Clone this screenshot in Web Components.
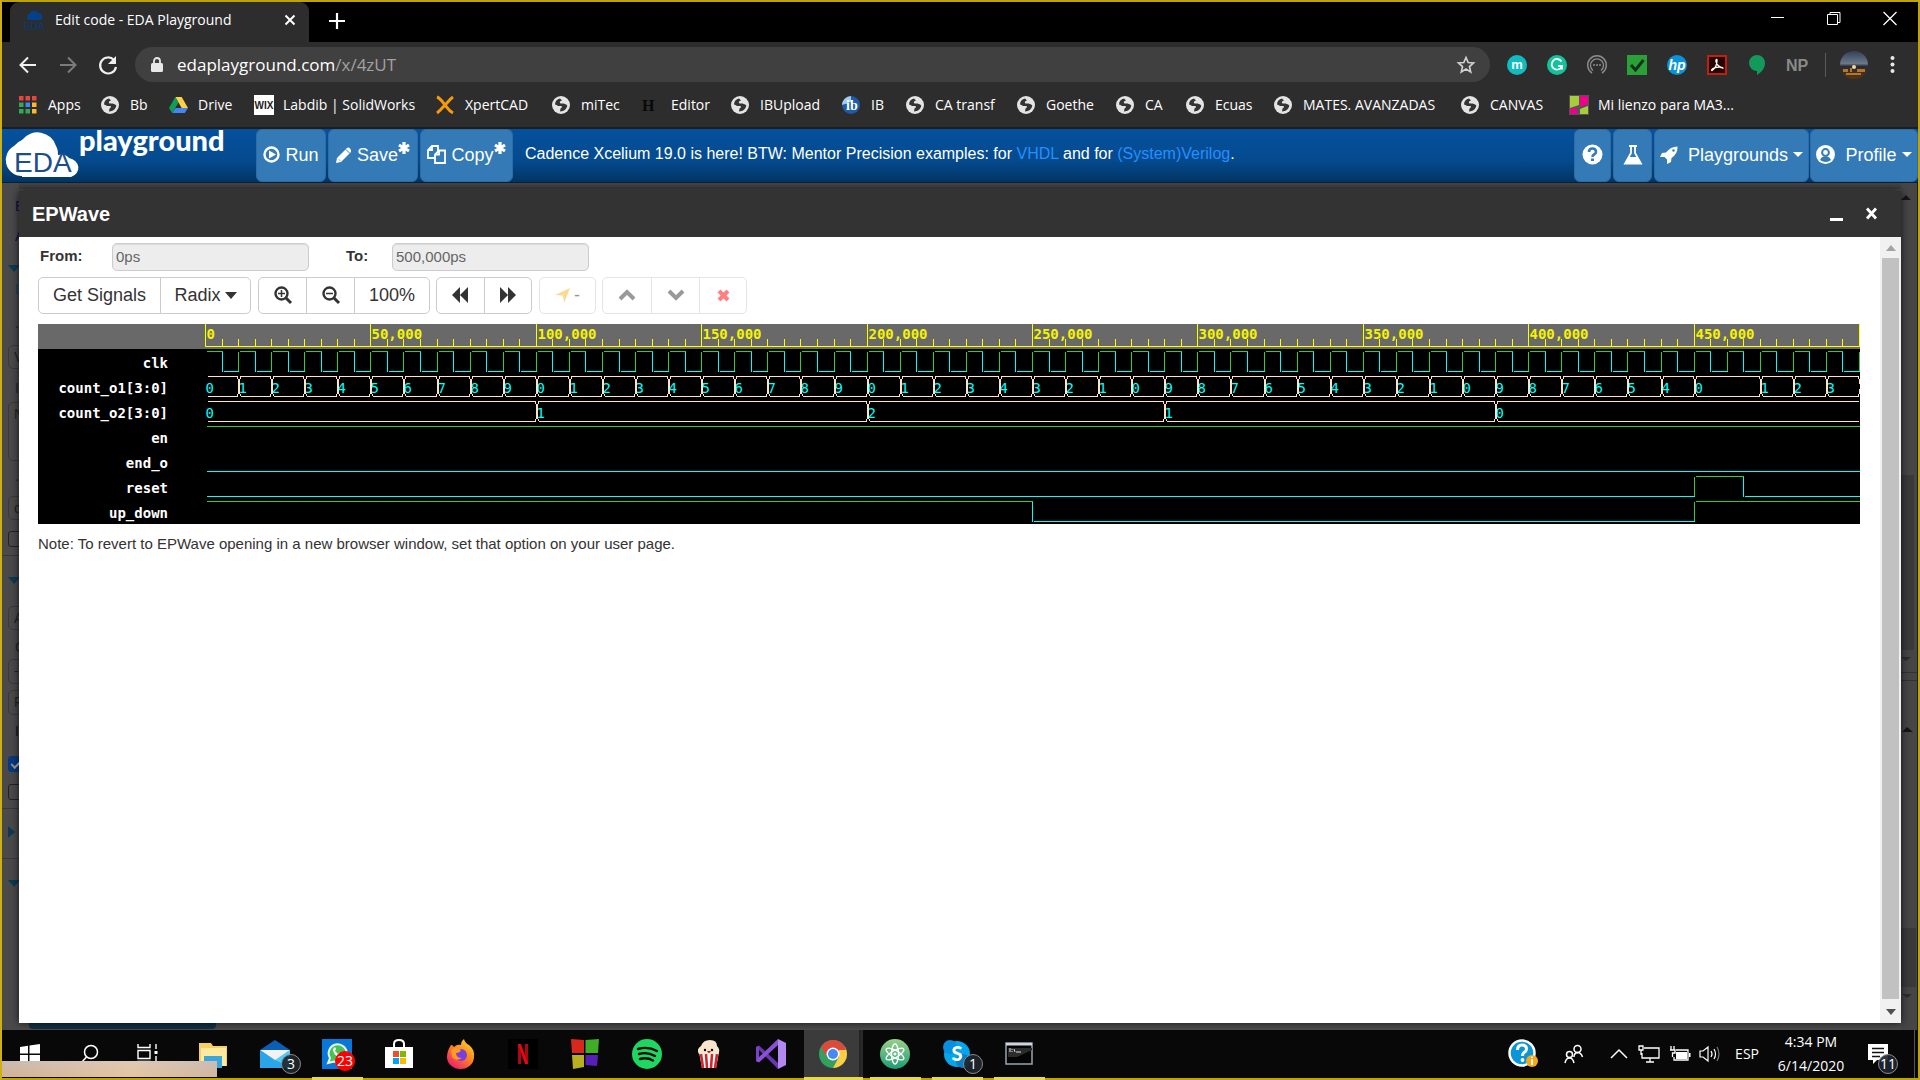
<!DOCTYPE html>
<html lang="en">
<head>
<meta charset="utf-8">
<title>Edit code - EDA Playground</title>
<style>
html,body{margin:0;height:100%}
body{font-family:"Liberation Sans",Arial,sans-serif;background:#000}
</style>
</head>
<body>
<desktop-frame>
  <tab-strip></tab-strip>
  <address-bar></address-bar>
  <bookmark-bar></bookmark-bar>
  <eda-header></eda-header>
  <page-stage>
    <page-backdrop></page-backdrop>
    <wave-dialog heading="EPWave">
      <range-form></range-form>
      <wave-toolbar></wave-toolbar>
      <wave-view></wave-view>
      <p slot="note">Note: To revert to EPWave opening in a new browser window, set that option on your user page.</p>
    </wave-dialog>
  </page-stage>
  <task-bar slot="bottom"></task-bar>
</desktop-frame>
<script>
const UI = '"Open Sans","Noto Sans",sans-serif';
function define(name, html, setup) {
  const tpl = document.createElement('template');
  tpl.innerHTML = html;
  customElements.define(name, class extends HTMLElement {
    connectedCallback() {
      if (this.shadowRoot) return;
      this.attachShadow({ mode: 'open' }).append(tpl.content.cloneNode(true));
      if (setup) setup.call(this, this.shadowRoot);
    }
  });
}
const RESET = `:host,*{box-sizing:border-box}svg{display:block;flex:none;overflow:visible}button{font:inherit;color:inherit;background:none;border:0;padding:0;margin:0}a{color:inherit;text-decoration:none}`;

define('desktop-frame', `<style>
:host{display:flex;flex-direction:column;min-height:100vh;box-sizing:border-box;border:2px solid;border-color:#bfa300 #bfa300 #bfa300 #d0b010;background:#2d2d2d}
::slotted(page-stage){flex:1}
</style><slot></slot><slot name="bottom"></slot>`);

/* ---------- browser chrome ---------- */
define('tab-strip', `<style>${RESET}
:host{display:flex;height:40px;background:#000;color:#fff;font:14px/20px ${UI}}
.tab{display:flex;align-items:center;width:299px;margin-left:8px;padding:0 12px 4px 14px;background:#2d2d2d;border-radius:9px 9px 0 0}
.tab span{flex:1;margin-left:11px}
.new{margin-left:20px;align-self:center;padding-bottom:2px}
.win{display:flex;margin-left:auto;padding-top:8px}
.win button{width:56px;display:flex;justify-content:center;align-items:flex-start}
</style>
<div class="tab"><svg width="20" height="20" viewBox="0 0 20 20"><path d="M4 10a4 4 0 0 1 1-6 5 5 0 0 1 9-1 4 4 0 0 1 3 7z" fill="#05418a"/><text x="0" y="20" font-family="Liberation Sans" font-size="10" fill="#0b3a72">EDA</text></svg>
<span>Edit code - EDA Playground</span><button aria-label="Close tab"><svg width="14" height="14"><path d="M2.500 2.500l9 9m0-9l-9 9" stroke="#fff" stroke-width="2"/></svg></button></div>
<button class="new" aria-label="New tab"><svg width="16" height="16"><path d="M8 0v16M0 8h16" stroke="#fff" stroke-width="2.200"/></svg></button>
<div class="win"><button aria-label="Minimize"><svg width="14" height="16"><path d="M0 7.500h13" stroke="#fff"/></svg></button>
<button aria-label="Restore"><svg width="14" height="16" fill="none" stroke="#fff"><path d="M.5 4.500h10v10H.5zM3 4V2.500h10v10h-2"/></svg></button>
<button aria-label="Close"><svg width="14" height="16"><path d="M.5 2l13 13M13.500 2l-13 13" stroke="#fff" stroke-width="1.300"/></svg></button></div>`);

define('address-bar', `<style>${RESET}
:host{display:flex;align-items:center;height:45px;padding:0 23px 0 16px;background:#2d2d2d;color:#e8e8e8}
.nav{display:flex;gap:20px;width:117px}
.omni{flex:1;display:flex;align-items:center;height:35px;background:#404040;border-radius:18px;padding:0 14px 0 15px}
.url{flex:1;margin-left:13px;font:17px/24px ${UI};color:#fff}.url i{font-style:normal;color:#a2a2a2}
.ext{display:flex;gap:20px;margin-left:17px;align-items:center}
.sep{width:1px;height:24px;background:#5a5a5a;margin-left:18px}
.av{margin:0 22px 0 14px}
</style>
<div class="nav"><button aria-label="Back"><svg width="20" height="20" fill="none" stroke="#f0f0f0" stroke-width="2"><path d="M18 10H3M10 2.500L2.500 10l7.500 7.500"/></svg></button>
<button aria-label="Forward"><svg width="20" height="20" fill="none" stroke="#7c7c7c" stroke-width="2"><path d="M2 10h15M10 2.500l7.500 7.500-7.500 7.500"/></svg></button>
<button aria-label="Reload"><svg width="20" height="20" fill="none" stroke="#f0f0f0" stroke-width="2.200"><path d="M16 5A8 8 0 1 0 18 12"/><path d="M18 1v8h-8z" fill="#f0f0f0" stroke="none"/></svg></button></div>
<div class="omni"><svg width="14" height="16" viewBox="0 0 14 16"><rect x="1" y="6" width="12" height="9" rx="1.500" fill="#e8e8e8"/><path d="M4 7V4a3 3 0 0 1 6 0v3" fill="none" stroke="#e8e8e8" stroke-width="1.800"/></svg>
<span class="url" role="textbox" aria-label="Address" contenteditable="plaintext-only">edaplayground.com<i>/x/4zUT</i></span>
<svg width="20" height="20" viewBox="0 0 20 20"><path d="M10 2.500l2.200 5 5.300.5-4 3.600 1.200 5.300L10 14.100l-4.700 2.800 1.200-5.300-4-3.600 5.300-.5z" fill="none" stroke="#d0d0d0" stroke-width="1.700"/></svg></div>
<div class="ext">
<svg width="20" height="20"><circle cx="10" cy="10" r="10" fill="#10bcc0"/><text x="10" y="14" text-anchor="middle" font-family="Liberation Sans" font-weight="bold" font-size="13" fill="#fff">m</text></svg>
<svg width="20" height="20"><circle cx="10" cy="10" r="10" fill="#12c39a"/><path d="M14.500 6.500A5.300 5.300 0 1 0 15 11h-4M15 11v3.500" fill="none" stroke="#fff" stroke-width="1.800"/></svg>
<svg width="20" height="20" fill="none" stroke="#8c8c8c"><path d="M5 18A9.300 9.300 0 1 1 15 18" stroke-width="1.500"/><path d="M6 15.500A6.500 6.500 0 1 1 14 15.500" stroke-width="1.300"/><path d="M6 10h8" stroke-dasharray="2 1" stroke-width="1.500"/></svg>
<svg width="20" height="20"><path d="M0 0h20v20H0z" fill="#2aa136"/><path d="M4 10l4.500 5L16.500 5" fill="none" stroke="#16301a" stroke-width="3"/></svg>
<svg width="20" height="20"><circle cx="10" cy="10" r="10" fill="#0a94d8"/><text x="10" y="14.500" text-anchor="middle" font-family="Liberation Sans" font-style="italic" font-weight="bold" font-size="14" fill="#fff">hp</text></svg>
<svg width="20" height="20"><path d="M1 1h18v18H1z" fill="#270505" stroke="#c02010" stroke-width="2"/><path d="M5 15.500c3-2 5-5 5-10 0-2-1.500-1-1 1 1 4 4 6 7 6.500 0-1-5-1.500-9 0-2 1-3 2.500-2 2.500z" fill="none" stroke="#fff" stroke-width="1.300"/></svg>
<svg width="20" height="20"><path d="M10 0a8 8 0 0 1 8 8c0 5-3 9-8 12v-4a8 8 0 0 1 0-16z" fill="#139a5b"/></svg>
<svg width="20" height="20"><text x="10" y="16" text-anchor="middle" font-family="Liberation Sans Narrow,Liberation Sans" font-weight="bold" font-size="16" fill="#8a8a8a">NP</text></svg></div>
<div class="sep"></div>
<svg class="av" width="28" height="28"><defs><linearGradient id="s" x2="0" y2="1"><stop offset="0" stop-color="#34405a"/><stop offset=".45" stop-color="#6a7888"/><stop offset=".55" stop-color="#2a2a34"/><stop offset="1" stop-color="#5a3510"/></linearGradient></defs><circle cx="14" cy="14" r="14" fill="url(#s)"/><path d="M3 18h5v3H3zM10 17h2v4h-2zM17 18h8v3h-8zM6 22h15v2H6z" fill="#b5762a"/><circle cx="14" cy="16" r="2" fill="#f5d9a0"/></svg>
<button aria-label="Menu"><svg width="5" height="20" fill="#e8e8e8"><circle cx="2.500" cy="3" r="2"/><circle cx="2.500" cy="9.500" r="2"/><circle cx="2.500" cy="16" r="2"/></svg></button>`);

const GLOBE = `<svg width="18" height="18" viewBox="0 0 18 18"><circle cx="9" cy="9" r="9" fill="#e4e4e4"/><path d="M8 2.500c-3 .5-5 3-5 6 1 0 2 .5 3 1.500h3.500c1 1 0 2-1 2.500L8 15.500c4 0 7-3 7.300-6-1-1.500-2.300-1-3.500-2H8.500C7 6 8 5 10 4.500z" fill="#343434"/></svg>`;
const MARKS = [
 ['Apps',82,`<svg width="18" height="18">${[0,1,2].map(r=>[0,1,2].map(c=>`<path d="M${c*6.500} ${r*6.500}h4.500v4.500h-4.500z" fill="${[['#e8453c','#e8453c','#e8453c'],['#34a853','#4285f4','#f9bb2d'],['#34a853','#34a853','#f9bb2d']][r][c]}"/>`).join('')).join('')}</svg>`],
 ['Bb',68,GLOBE],
 ['Drive',85,`<svg width="19" height="18"><path d="M6.300 1h6.400L19 12h-6.300z" fill="#ffcf48"/><path d="M6.300 1L0 12l3.200 5L9.500 6.500z" fill="#0f9d58"/><path d="M6.500 12H19l-3.300 5H3.200z" fill="#4285f4"/></svg>`],
 ['Labdib | SolidWorks',182,`<svg width="20" height="20"><path d="M0 0h20v20H0z" fill="#fff"/><text x="10" y="14" text-anchor="middle" font-family="Liberation Sans" font-weight="bold" font-size="10" fill="#222">WIX</text></svg>`],
 ['XpertCAD',116,`<svg width="18" height="18"><path d="M1 1c3 1 5 4 8 8s4 6 8 8M17 1c-3 2-5 5-8 8s-5 6-8 8" fill="none" stroke="#f79a0c" stroke-width="3"/></svg>`],
 ['miTec',90,GLOBE],
 ['Editor',89,`<svg width="18" height="18"><text x="0" y="15" font-family="Liberation Serif" font-weight="bold" font-size="16" fill="#080808">H</text></svg>`],
 ['IBUpload',111,GLOBE],
 ['IB',64,`<svg width="18" height="18"><circle cx="9" cy="9" r="9" fill="#1c5ca8"/><path d="M0 9a9 9 0 0 1 9-9v6z" fill="#a8cbe8"/><text x="4" y="14" font-family="Liberation Serif" font-weight="bold" font-size="14" fill="#fff">ib</text></svg>`],
 ['CA transf',111,GLOBE],['Goethe',99,GLOBE],['CA',70,GLOBE],['Ecuas',88,GLOBE],['MATES. AVANZADAS',187,GLOBE],['CANVAS',108,GLOBE],
 ['Mi lienzo para MA3...',200,`<svg width="20" height="20"><path d="M0 0h20v20H0z" fill="#555"/><path d="M1 1h9v9l-9 3z" fill="#a6ce39"/><path d="M11 1h8v8l-8 3zM1 14l6-2 2 7H1z" fill="#ec008c"/><path d="M11 14l8-3v8h-8z" fill="#a6ce39"/></svg>`]];
define('bookmark-link', `<style>${RESET}
:host{display:block}a{display:flex;align-items:center;height:100%}
.i{width:29px;flex:none}span{white-space:nowrap}
</style><a href="#"><div class="i"></div><span><slot></slot></span></a>`, function (r) {
  r.querySelector('.i').innerHTML = MARKS[this.getAttribute('icon')][2];
});
define('bookmark-bar', `<style>
:host{display:grid;grid-template-columns:${MARKS.map(m=>m[1]+'px').join(' ')};height:42px;box-sizing:border-box;padding:0 0 4px 17px;background:#2d2d2d;border-bottom:2px solid #1d1d1d;color:#fff;font:14px/20px ${UI}}
</style>${MARKS.map((m,i)=>`<bookmark-link icon="${i}">${m[0]}</bookmark-link>`).join('')}`);

/* ---------- EDA Playground header ---------- */
define('header-button', `<style>${RESET}
:host{display:block}
button{display:flex;align-items:center;justify-content:center;gap:5px;width:100%;height:53px;padding-bottom:2px;border:1px solid #2e6da4;border-radius:6px;background:#337ab7;color:#fff;font:18px/24px "Liberation Sans",sans-serif;white-space:nowrap}
</style><button><slot></slot></button>`);
const STAR = `<svg class="star" width="12" height="12"><path d="M6 0v12M1 3l10 6M1 9l10-6" stroke="#fff" stroke-width="3.200"/></svg>`;
define('eda-header', `<style>${RESET}
:host{display:flex;height:54px;background:linear-gradient(#05519d,#044a8e 60%,#033564);border-bottom:1px solid #0a2038;color:#fff}
.logo{width:254px;flex:none}
.g{display:flex;gap:2px;flex:none}
p{flex:1;margin:0;padding-left:12px;font:16px/50px "Liberation Sans",sans-serif;white-space:nowrap}
p a{color:#2390ff}
.star{display:inline-block;vertical-align:7px}
.w0{width:70px}.w1{width:90px}.w2{width:93px}.w3{width:37px}.w4{width:39px}.w5{width:155px}.w6{width:108px;margin-left:-1px}
b{display:inline-block;border:5px solid transparent;border-top-color:#fff;border-bottom:0}
</style>
<svg class="logo" width="254" height="53"><path d="M20 47A16 16 0 0 1 12 17 19 19 0 0 1 20 11 19 18 0 0 1 54 17q2 3 2 9 7-2 11 3A12 10 0 0 1 69 48H20z" fill="#fff"/><text x="12" y="43" font-family="Liberation Sans,sans-serif" font-size="28" fill="#1b4f8c">EDA</text><text x="77" y="22" font-family="Lato,sans-serif" font-weight="900" font-size="29" fill="#fff">playground</text></svg>
<div class="g"><header-button class="w0"><svg width="17" height="17"><circle cx="8.500" cy="8.500" r="7" fill="none" stroke="#fff" stroke-width="2.400"/><path d="M6 4.500l7 4-7 4z" fill="#fff"/></svg>Run</header-button>
<header-button class="w1"><svg width="16" height="16"><path d="M0 16l1-5L11 1q1.500-1 3 .5t1 3.500L5 15z" fill="#fff"/><path d="M10 2.500l4 4M3 12.500l1 1" stroke="#337ab7"/></svg><span>Save${STAR}</span></header-button>
<header-button class="w2"><svg width="19" height="19" fill="#337ab7" stroke="#fff" stroke-width="1.800"><path d="M5 1h6v12H1V5z"/><path d="M5 1v4H1" fill="none"/><path d="M12 5.500h6V18H8V9.500z"/><path d="M12 5.500v4H8" fill="none"/></svg><span>Copy${STAR}</span></header-button></div>
<p>Cadence Xcelium 19.0 is here! BTW: Mentor Precision examples: for <a href="#">VHDL</a> and for <a href="#">(System)Verilog</a>.</p>
<div class="g"><header-button class="w3"><svg width="21" height="21"><circle cx="10.500" cy="10.500" r="10" fill="#fff"/><path d="M7 8q0-3.500 3.500-3.500T14 8q0 1.500-2 2.500-1.500.8-1.500 2.500" fill="none" stroke="#337ab7" stroke-width="2.600"/><path d="M9 14.500h3v2.500H9z" fill="#337ab7"/></svg></header-button>
<header-button class="w4"><svg width="20" height="20"><path d="M6 1h8M8 1v7L2 18.500h16L12 8V1" fill="none" stroke="#fff" stroke-width="1.800"/><path d="M6 12h8l4 7H2z" fill="#fff"/></svg></header-button>
<header-button class="w5"><svg width="18" height="18"><path d="M17.500.5q.5 7-6 11.500l-.5 4-4 2 0-4.500L4.500 11 0 11l2-4 4-.5Q10.500.5 17.500.5z" fill="#fff"/><circle cx="13.500" cy="4.500" r="1.200" fill="#337ab7"/></svg><span>&nbsp;Playgrounds</span><b></b></header-button>
<header-button class="w6"><svg width="19" height="19"><circle cx="9.500" cy="9.500" r="9.500" fill="#fff"/><circle cx="9.500" cy="7.500" r="3.400" fill="none" stroke="#337ab7" stroke-width="2"/><path d="M4 15q1-3 3.500-3.500h4Q14 12 15 15q-5 4-11 0z" fill="#337ab7"/></svg><span>&nbsp;Profile</span><b></b></header-button></div>`);

/* ---------- dimmed page behind the dialog ---------- */
define('page-stage', `<style>:host{display:grid;grid-template:1fr/1fr;background:#484848}
::slotted(*){grid-area:1/1}
::slotted(wave-dialog){margin:8px 17px 7px}</style><slot></slot>`);
const RAIL = [[197,'t','E','#101040'],[227,'t','A','#0c1040'],[265,'d'],[280,'t','L','#16405c'],[314,'t','.','#222'],[345,'b','V',24],[379,'t','I','#222'],[402,'b','N',59],[467,'t','.','#222'],[496,'b','c',24],[531,'c',0],[555,'l'],[577,'d'],[606,'b','A',24],[638,'t','C','#222'],[659,'b','-2',25],[690,'b','F',25],[722,'t','I','#111'],[756,'c',1],[784,'c',0],[808,'l'],[826,'r'],[858,'l'],[880,'d']];
define('page-backdrop', `<style>${RESET}
:host{display:flex;justify-content:space-between;align-items:stretch;background:linear-gradient(#454545,#3c3c3c 6px,#4c4c4c 6px)}
.rail{width:17px;overflow:hidden;font:14px/18px "Liberation Sans",sans-serif;background:#4a4a4a}
.rail div,.rail input{display:block}
.t{height:18px;padding-left:13px}.b{margin-left:6px;width:40px;padding:2px 5px;border:1px solid #3a3a3a;border-radius:5px;color:#222}
.d{width:0;height:7px;margin-left:6px;border:6px solid transparent;border-top:7px solid #0e3a54;border-bottom:0}
.r{width:0;height:12px;margin-left:6px;border:6px solid transparent;border-left:7px solid #0e3a54;border-right:0}
.l{height:1px;background:#383838}
input{appearance:none;width:16px;height:16px;margin:0 0 0 6px;border:1px solid #222;border-radius:3px}
input:checked{background:#083a80;border-color:#083a80}
input:checked::after{content:"";display:block;width:9px;height:4px;margin:3px 2px;border:2px solid #888;border-top:0;border-right:0;transform:rotate(-45deg)}
.mid{flex:1;display:flex;align-items:flex-end;padding-left:10px}
.go{width:187px;height:12px;margin-bottom:1px;background:#0d3348;border-radius:0 0 4px 4px}
</style><div class="rail"></div><div class="mid"><div class="go"></div></div>
<svg width="17" height="847"><path d="M0 0h17v847H0z" fill="#464646"/><path d="M0 292h13v175H0zM0 745h15v59H0z" fill="#3a3a3a"/><path d="M0 17l5-5 5 5zM1 549l5-5 6 5z" fill="#161616"/><path d="M0 474l5 4 5-4zM1 811l5 4 5-4z" fill="#2c2c2c"/><path d="M0 489.500h17M0 497.500h17" stroke="#333"/><path d="M16.500 0v847" stroke="#1c1c1c"/></svg>`, function(r){
  const rail=r.querySelector('.rail'); let y=183;
  for(const [top,k,a,b] of RAIL){
    const e=document.createElement(k==='c'?'input':'div');
    e.className=k; const h={t:18,d:7,r:12,l:1,c:16,b}[k];
    if(k==='c'){e.type='checkbox';e.checked=!!a;e.setAttribute('aria-label','Option');}
    if(k==='t'){e.textContent=a;e.style.color=b;}
    if(k==='b'){e.textContent=a;e.style.height=b+'px';}
    e.style.marginTop=(top-y)+'px'; y=top+h; rail.append(e);
  }
});

/* ---------- EPWave dialog ---------- */
define('wave-dialog', `<style>${RESET}
:host{display:flex;flex-direction:column;background:#fff;box-shadow:0 0 8px rgba(0,0,0,.75);color:#333}
header{display:flex;align-items:center;height:46px;padding:0 22px 0 13px;background:#333;color:#fff}
h1{flex:1;margin:0;font:bold 20px/24px "Liberation Sans",sans-serif}
header div{display:flex;gap:21px}
.body{flex:1;display:flex}
.content{flex:1;min-width:0;padding:6px 20px 0 19px}
.bar{width:21px;background:#f1f1f1;display:flex;flex-direction:column;align-items:center;justify-content:space-between;padding:8px 0 8px}
.thumb{flex:1;width:17px;background:#c1c1c1;margin:7px 0 10px}
::slotted(p){margin:10px 0 0;font:15px/20px "Liberation Sans",sans-serif}
</style><header><h1></h1><div><button aria-label="Minimize"><svg width="14" height="14"><path d="M0 11h13v3H0z" fill="#fff"/></svg></button><button aria-label="Close"><svg width="14" height="14"><path d="M2 1.500l9 10M11 1.500L2 11.500" stroke="#fff" stroke-width="2.800"/></svg></button></div></header>
<div class="body"><div class="content"><slot></slot><slot name="note"></slot></div>
<div class="bar"><svg width="10" height="6"><path d="M0 6l5-6 5 6z" fill="#a3a3a3"/></svg><div class="thumb"></div><svg width="10" height="6"><path d="M0 0l5 6 5-6z" fill="#505050"/></svg></div></div>`, function(r){
  r.querySelector('h1').textContent=this.getAttribute('heading');
});
define('range-form', `<style>${RESET}
:host{display:flex;align-items:center;height:28px;font:15px/20px "Liberation Sans",sans-serif}
label{font-weight:bold;padding-left:2px;width:74px;padding-bottom:2px}
input+label{margin-left:35px;width:48px}
input{width:197px;height:28px;border:1px solid #ccc;border-radius:5px;background:#ededed;box-shadow:inset 0 1px 1px rgba(0,0,0,.08);font:inherit;color:#666;padding:0 3px 2px}
</style><label for="f">From:</label><input id="f" readonly value="0ps"><label for="t">To:</label><input id="t" readonly value="500,000ps">`);
define('wave-toolbar', `<style>${RESET}
:host{display:flex;gap:7px;padding:6px 0 10px;font:18px/24px "Liberation Sans",sans-serif}
.g{display:flex;border:1px solid #ccc;border-radius:5px;height:37px}
.g.n{margin-left:-1px}
button{display:flex;align-items:center;justify-content:center;gap:4px;padding-bottom:1px}
button+button{border-left:1px solid #ccc}
.off{border-color:#e5e5e5}.off button{border-color:#e5e5e5;color:#999}
.a{width:121px}.b{width:90px}.c{width:47px}.d{width:75px}.e{width:48px}.f{width:55px}
b{border:6px solid transparent;border-top:7px solid #333;border-bottom:0}
</style>
<div class="g"><button class="a">Get Signals</button><button class="b">Radix<b></b></button></div>
<div class="g"><button class="c" aria-label="Zoom in"><svg width="18" height="18"><circle cx="7.500" cy="7.500" r="6" fill="none" stroke="#333" stroke-width="2.400"/><path d="M12 12l5 5" stroke="#333" stroke-width="3"/><path d="M4 7.500h7M7.500 4v7" stroke="#333" stroke-width="1.500"/></svg></button><button class="e" aria-label="Zoom out"><svg width="18" height="18"><circle cx="7.500" cy="7.500" r="6" fill="none" stroke="#333" stroke-width="2.400"/><path d="M12 12l5 5" stroke="#333" stroke-width="3"/><path d="M4 7.500h7" stroke="#333" stroke-width="1.500"/></svg></button><button class="d">100%</button></div>
<div class="g n"><button class="c" aria-label="Previous"><svg width="18" height="16"><path d="M8 0v16L0 8zM16 0v16L8 8z" fill="#333"/></svg></button><button class="c" aria-label="Next"><svg width="18" height="16"><path d="M1 0v16l8-8zM9 0v16l8-8z" fill="#333"/></svg></button></div>
<div class="g off"><button class="f" disabled><svg width="15" height="15"><path d="M15 0L9 15 8 7.500 0 7z" fill="#ffd890"/></svg><span>-</span></button></div>
<div class="g off n"><button class="e" disabled aria-label="Up"><svg width="18" height="12"><path d="M2 10l7-7 7 7" fill="none" stroke="#999" stroke-width="4"/></svg></button><button class="e" disabled aria-label="Down"><svg width="18" height="12"><path d="M2 2l7 7 7-7" fill="none" stroke="#999" stroke-width="4"/></svg></button><button class="c" disabled aria-label="Remove"><svg width="13" height="13"><path d="M2 2l9 9M11 2l-9 9" stroke="#ff8080" stroke-width="4.200"/></svg></button></div>`);

const LEN = 500, ROW = 25, TOP = 25;
define('wave-view', `<style>:host{display:flex;background:#000;height:200px;font:14px/25px "DejaVu Sans Mono",monospace}
.names{width:167px;flex:none;color:#fff;background:linear-gradient(#696969 25px,#000 25px);padding:25px 37px 0 0;box-sizing:border-box;text-align:right;font-weight:bold}
.names div{height:25px;padding-top:2px;box-sizing:border-box}
.plot{flex:1;min-width:0}svg{display:block}.r{font-weight:bold}</style>
<div class="names">${['clk','count_o1[3:0]','count_o2[3:0]','en','end_o','reset','up_down'].map(n=>`<div>${n}</div>`).join('')}</div><div class="plot"></div>`, function(r){
  const plot=r.querySelector('.plot');
  const seq=[];
  for(let t=0;t<25;t++)seq.push([t*10,t%10]);
  [3,2,1,0,9,8,7,6,5,4,3,2,1,0,9,8,7,6,5,4].forEach((v,i)=>seq.push([250+i*10,v]));
  seq.push([450,0],[470,1],[480,2],[490,3]);
  const draw=()=>{
    const w=plot.clientWidth; if(!w)return;
    const X=t=>Math.min(Math.round(t*(w-1)/LEN),w-1)+.5;
    let s=`<svg width="${w}" height="200" shape-rendering="crispEdges" fill="none" stroke-width="1"><path d="M0 0h${w}v25H0z" fill="#696969"/>`;
    let ruler=`M0 22.500H${w}`, labels='';
    for(let t=0;t<=LEN;t+=5){
      ruler+=`M${X(t)} ${t%50?15:0}V22`;
      if(t%50===0&&t<LEN)labels+=`<text x="${X(t)+1}" y="15">${t?t+',000':'0'}</text>`;
    }
    s+=`<path d="${ruler}" stroke="#ff0"/><g class="r" fill="#f4f400">${labels}</g>`;
    const line=(row,edges)=>{
      const hi=TOP+row*ROW+2.5, lo=hi+20; let g='',c='';
      edges.forEach(([t,v],i)=>{
        const end=i+1<edges.length?edges[i+1][0]:LEN;
        if(i){const e=`M${X(t)} ${hi}V${lo}`; v?g+=e:c+=e;}
        const p=`M${X(t)+1} ${v?hi:lo}H${X(end)}`; v?g+=p:c+=p;
      });
      s+=`<path d="${g}" stroke="#32cd32"/><path d="${c}" stroke="#0ff"/>`;
    };
    const bus=(row,vals)=>{
      const hi=TOP+row*ROW+2.5, lo=hi+20, mid=hi+10; let p='',tx='';
      vals.forEach(([t,v],i)=>{
        const last=i+1===vals.length, a=X(t), b=last?X(LEN):X(vals[i+1][0]);
        p+=`M${a+2} ${hi}H${b-1}M${a+2} ${lo}H${b-1}`;
        if(i)p+=`M${a+2} ${hi}L${a} ${mid}L${a+2} ${lo}`;
        if(!last||row===1)p+=`M${b-1} ${hi}L${b+1} ${mid}L${b-1} ${lo}`;
        tx+=`<text x="${a}" y="${lo-4}">${v}</text>`;
      });
      s+=`<path d="${p}" stroke="#ffe4c4"/><g fill="#0ff">${tx}</g>`;
    };
    const clk=[]; for(let t=0;t<=LEN;t+=5)clk.push([t,t%10?0:1]);
    line(0,clk); bus(1,seq); bus(2,[[0,0],[100,1],[200,2],[290,1],[390,0]]);
    line(3,[[0,1]]); line(4,[[0,0]]); line(5,[[0,0],[450,1],[465,0]]); line(6,[[0,1],[250,0],[450,1]]);
    plot.innerHTML=s+'</svg>';
  };
  draw(); addEventListener('resize',draw);
});

/* ---------- taskbar ---------- */
const W='stroke="#fff" fill="none"';
const APPS=[
 ['Start','',`<svg width="20" height="20"><path d="M0 3l8-1.200V9.500H0zM9.500 1.600L20 0v9.500H9.500zM0 11h8v7.800L0 17.500zM9.500 11H20v9l-10.500-1.300z" fill="#fff"/></svg>`],
 ['Search','',`<svg width="20" height="20" ${W} stroke-width="1.500"><circle cx="12" cy="8" r="6.500"/><path d="M7.500 13L2 19"/></svg>`],
 ['Task View','',`<svg width="28" height="20" ${W} stroke-width="1.400"><path d="M1 0v3.500h12V0M1 6.500h12v8H1zM1 20v-2.500h12V20M19 0v5M19 12v8"/><path d="M17.500 7h3v3h-3z" fill="#fff" stroke="none"/></svg>`],
 ['File Explorer','',`<svg width="28" height="28"><path d="M0 3h12l2 3h14v20H0z" fill="#f6d060"/><path d="M2 8h25v18H2z" fill="#fde9a0"/><path d="M5 28V16h18v12h-5v-6h-8v6z" fill="#3aa7dc"/></svg>`],
 ['Mail','',`<svg width="30" height="30"><path d="M0 11L15 1l15 10v18H0z" fill="#0a5eb5"/><path d="M0 11h30L15 22z" fill="#f2f2f2"/><path d="M0 11l15 10L30 29H0z" fill="#2aa5ea"/><path d="M30 11L15 21l15 8z" fill="#50ccf5"/></svg>`,'3'],
 ['WhatsApp','on',`<svg width="30" height="30"><path d="M0 0h30v30H0z" fill="#0877d8"/><path d="M6 24l2-5a9 9 0 1 1 4 3.500z" fill="#45c355" stroke="#e8f5e8" stroke-width="2"/><path d="M11 10c0 5 4 8 8 8l1-3-3-1-1 1-3-3 1-2-1-2z" fill="#fff"/></svg>`,'23','red'],
 ['Store','',`<svg width="30" height="30"><path d="M10 8V5q0-4 5-4t5 4v3" ${W} stroke-width="2"/><path d="M1 8h28v21H1z" fill="#fff"/><path d="M9 12h6v6H9z" fill="#f25022"/><path d="M16 12h6v6h-6z" fill="#7fba00"/><path d="M9 19h6v6H9z" fill="#00a4ef"/><path d="M16 19h6v6h-6z" fill="#ffb900"/></svg>`],
 ['Firefox','',`<svg width="30" height="30"><defs><linearGradient id="f" x1="1" y1="0" x2=".3" y2="1"><stop offset="0" stop-color="#ffe22e"/><stop offset=".5" stop-color="#ff8a1e"/><stop offset="1" stop-color="#f0206a"/></linearGradient></defs><path d="M6 6l2 2q3-3 7-2 0-4 3-6 1 4 5 6 6 5 5 12a13.500 12 0 0 1-27 0q0-6 4-12z" fill="url(#f)"/><circle cx="15" cy="16" r="6" fill="#7a3ee0"/><path d="M5 11q4-4 10 0-1 3-5 3 0 5 6 5-6 4-10-1z" fill="#ff9b20"/></svg>`],
 ['Netflix','',`<svg width="30" height="30"><path d="M0 0h30v30H0z" fill="#000"/><path d="M10 5h3v20h-3zM17 5h3v20h-3z" fill="#b00610"/><path d="M10 5h3l7 20h-3z" fill="#e50914"/></svg>`],
 ['Color squares','',`<svg width="28" height="30"><path d="M0 0l13 1v13H1z" fill="#d8281c"/><path d="M14.500 1L28 0l-1 14H14.500z" fill="#3fae26"/><path d="M1 16h12v12L2 30z" fill="#b8b020"/><path d="M14.500 16H27l-1 11-11.500-1z" fill="#5620b8"/></svg>`],
 ['Spotify','',`<svg width="30" height="30"><circle cx="15" cy="15" r="15" fill="#1ed760"/><path d="M6 10q10-3 19 2M7 15q8-2.500 16 2M8 20q7-2 13 1.500" fill="none" stroke="#0a0a0a" stroke-width="2.400" stroke-linecap="round"/></svg>`],
 ['Popcorn Time','',`<svg width="24" height="30"><path d="M2 13h20l-3 16H5z" fill="#fff"/><path d="M4 15l2 14M9 15l1 14M15 15l-1 14M20 15l-2 14" stroke="#d02830" stroke-width="2.600"/><path d="M2 15q-3-5 2-8 2-6 9-6 7 0 7 6 4 4 1 8z" fill="#f5e6cc"/><circle cx="8" cy="11" r="1.200"/><circle cx="15" cy="11" r="1.200"/><path d="M10 12h4q-2 4-4 0z" fill="#c01818"/></svg>`],
 ['Visual Studio','',`<svg width="30" height="30"><path d="M0 8l3-1.500L22 24l0 6L2 10z" fill="#6a35b0"/><path d="M0 22V8l3-1v16z" fill="#7a42c4"/><path d="M0 22l3 1.500L22 6V0L2 19z" fill="#8a50d8"/><path d="M22 0l8 4v22l-8 4z" fill="#b488f0"/></svg>`],
 ['Chrome','on active',`<svg width="28" height="28" viewBox="0 0 28 28"><circle cx="14" cy="14" r="14" fill="#34a060"/><path d="M1.900 7A14 14 0 0 1 26.100 7L14 8l-6 9z" fill="#dc4a3c"/><path d="M26.100 7A14 14 0 0 1 14 28l6-11V8z" fill="#ffce45"/><path d="M14 7h12.100l1 3H14z" fill="#dc4a3c"/><circle cx="14" cy="14" r="6.500" fill="#fff"/><circle cx="14" cy="14" r="5" fill="#4688f4"/></svg>`],
 ['Atom','on',`<svg width="30" height="30"><defs><linearGradient id="a" x2="0" y2="1"><stop offset="0" stop-color="#9ad088"/><stop offset="1" stop-color="#1a9e76"/></linearGradient></defs><circle cx="15" cy="15" r="15" fill="url(#a)"/><g fill="none" stroke="#fff" stroke-width="1.400"><ellipse cx="15" cy="15" rx="3.500" ry="10"/><ellipse cx="15" cy="15" rx="3.500" ry="10" transform="rotate(60 15 15)"/><ellipse cx="15" cy="15" rx="3.500" ry="10" transform="rotate(-60 15 15)"/></g><circle cx="15" cy="15" r="1.500" fill="#fff"/></svg>`],
 ['Skype','on',`<svg width="30" height="30"><circle cx="15" cy="15" r="13" fill="#05a5ec"/><circle cx="8" cy="8" r="7" fill="#0a8fe0"/><circle cx="21" cy="22" r="7" fill="#0a7fc8"/><text x="15" y="22" text-anchor="middle" font-family="Lato" font-weight="900" font-size="20" fill="#fff">S</text></svg>`,'1'],
 ['Command Prompt','on',`<svg width="28" height="24"><path d="M1 1h26v21H1z" fill="#050505" stroke="#9aa4b0" stroke-width="1.500"/><path d="M1 1h26v2.500H1z" fill="#d0d6de"/><path d="M3 6h24v2L12 15H3z" fill="#2c2c2c"/><path d="M4 7h2M4 9h2M7 7v1M7 9v1M9 7l1 3M11 10h5" stroke="#ddd"/></svg>`]];
define('task-bar', `<style>${RESET}
:host{display:flex;height:48px;background:#080808;color:#fff;font:14px/20px ${UI};position:relative}
.apps{display:flex}
.apps button{position:relative;width:62px;display:flex;align-items:center;justify-content:center}
.apps button:first-child{width:56px}
.on::after{content:"";position:absolute;left:6px;width:51px;bottom:-2px;height:3px;background:#e6d94c}
.active{background:linear-gradient(90deg,transparent 2px,#3b3b3b 2px,#3b3b3b 57px,#222 57px,#2c2c2c 61px,transparent 61px)}
.active::after{left:2px;width:59px}
.n{position:absolute;right:5px;bottom:4px;min-width:20px;height:20px;border-radius:10px;border:1px solid #8a8a8a;background:rgba(30,38,46,.92);font-size:14px;line-height:18px;text-align:center}
.n.red{background:#f00;border-color:#f00;right:13px;bottom:7px}
.veil{position:absolute;left:0;bottom:1px;width:215px;height:16px;background:linear-gradient(90deg,rgba(190,160,140,.2),rgba(255,220,170,.35) 60%,rgba(200,180,170,.3)),linear-gradient(#cdbfbd,#d6b896)}
.tray{display:flex;align-items:center;margin-left:auto;flex:none}
.clock{width:96px;margin-left:4px;text-align:center;line-height:24px}
.note{position:relative;margin:0 26px 0 9px}
.note .n{right:-10px;bottom:-10px}
.edge{width:1px;align-self:stretch;background:#555;margin-right:3px}
</style><div class="apps">${APPS.map(a=>`<button class="${a[1]}" aria-label="${a[0]}">${a[2]}${a[3]?`<span class="n ${a[4]||''}">${a[3]}</span>`:''}</button>`).join('')}</div>
<div class="veil"></div>
<div class="tray">
<svg width="30" height="30"><circle cx="14" cy="14" r="12.500" fill="#0b96d8" stroke="#fff" stroke-width="2.500"/><path d="M9.500 11q0-5 4.500-5t4.500 4q0 2-2.500 3.500-1.500 1-1.500 3.500" fill="none" stroke="#fff" stroke-width="3"/><circle cx="14.500" cy="21" r="1.900" fill="#fff"/><circle cx="24" cy="22" r="6" fill="#f5a81c"/><path d="M24 20v6M24 17.500v1.500" stroke="#fff" stroke-width="1.800"/></svg>
<svg style="margin-left:26px" width="20" height="20" ${W} stroke-width="1.500"><circle cx="13.500" cy="5" r="3.500"/><path d="M10 13q0-4 3.500-4.500 3.500 0 5 4.500"/><circle cx="5.500" cy="10.500" r="3"/><path d="M1 19q1-5 4.500-5t4.500 5"/></svg>
<svg style="margin-left:26px" width="18" height="10" ${W} stroke-width="1.500"><path d="M1 9l8-8 8 8"/></svg>
<svg style="margin-left:10px" width="22" height="18" ${W} stroke-width="1.300"><path d="M6 3h15v10H4V8M12 13v4M8 17h8M1 1h4v4H1zM3 5v5"/></svg>
<svg style="margin-left:9px" width="22" height="16" ${W} stroke-width="1.300"><path d="M2 0v4M5 0v4M1 4h5v3H3.500v4M7 4h12v10H5v-3"/><path d="M7 6h11v7H7zM20 7h1.500v4H20z" fill="#fff" stroke="none"/></svg>
<svg style="margin-left:8px" width="22" height="18" ${W} stroke-width="1.200"><path d="M1 6h3l5-4v14l-5-4H1zM12 6q2 3 0 6M15 4q3 5 0 10"/><path d="M18 2q4 7 0 14" stroke="#777"/></svg>
<span style="margin-left:14px">ESP</span>
<div class="clock">4:34 PM<br>6/14/2020</div>
<div class="note"><svg width="20" height="20"><path d="M0 0h20v16H9l-4 4v-4H0z" fill="#fff"/><path d="M4 4.500h12M4 8.500h12M4 12.500h8" stroke="#111" stroke-width="1.300"/></svg><span class="n">11</span></div>
<div class="edge"></div></div>`);
</script>
</body>
</html>
